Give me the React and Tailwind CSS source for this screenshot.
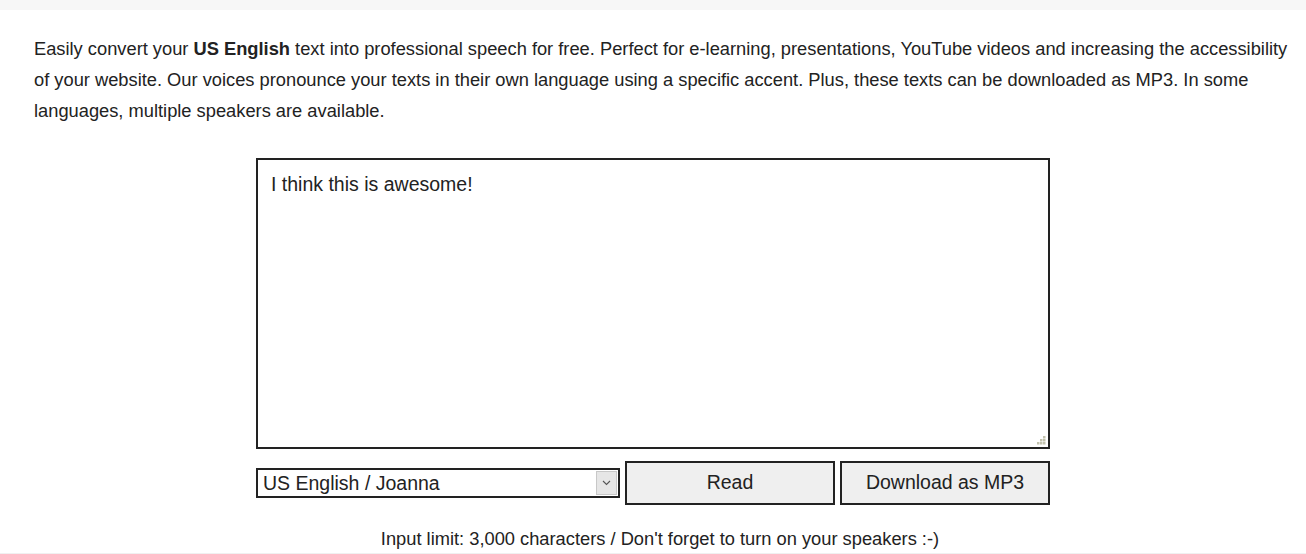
import React, { useState } from "react";

function ResizeGrip() {
  // little dotted corner in the bottom right of the text box
  const dots = [
    [6, 0],
    [3, 3],
    [6, 3],
    [0, 6],
    [3, 6],
    [6, 6],
  ];
  return (
    <svg width="9" height="9" viewBox="0 0 9 9" className="absolute right-[4px] bottom-[4px]">
      {dots.map(([x, y], i) => (
        <rect key={i} x={x} y={y} width="2.5" height="2.5" fill="#c2c2ad" />
      ))}
    </svg>
  );
}

export default function App() {
  const [text, setText] = useState("I think this is awesome!");
  const [voice, setVoice] = useState("joanna");

  return (
    <div className="w-[1306px] h-[554px] bg-white text-[#222] font-['Liberation_Sans',Arial,sans-serif] flex flex-col overflow-hidden">
      <div className="h-[10px] bg-[#f7f7f7]" />

      <p className="mt-[23px] pl-[34px] pr-[12px] text-[18.3px] leading-[31px]">
        Easily convert your <b>US English</b> text into professional speech for free. Perfect for e-learning,
        presentations, YouTube videos and increasing the accessibility of your website. Our voices pronounce your
        texts in their own language using a specific accent. Plus, these texts can be downloaded as MP3. In some
        languages, multiple speakers are available.
      </p>

      <div className="mt-[32px] flex flex-col items-center">
        <div className="relative w-[794px] h-[291px]">
          <textarea
            value={text}
            onChange={(e) => setText(e.target.value)}
            className="w-full h-full border-2 border-[#222] bg-white resize-none outline-none px-[13px] pt-[12px] text-[19.5px] leading-[24px] text-[#222] font-['Liberation_Sans',Arial,sans-serif]"
          />
          <ResizeGrip />
        </div>

        <div className="mt-[12px] w-[794px] flex items-center gap-[5px]">
          <div className="relative w-[364px] h-[30px]">
            <select
              value={voice}
              onChange={(e) => setVoice(e.target.value)}
              className="appearance-none w-full h-full border-2 border-[#222] bg-white pl-[5px] text-[19.5px] leading-[24px] text-[#222] outline-none font-['Liberation_Sans',Arial,sans-serif]"
            >
              <option value="joanna">US English / Joanna</option>
              <option value="matthew">US English / Matthew</option>
              <option value="ivy">US English / Ivy</option>
            </select>
            <span className="pointer-events-none absolute right-[3px] top-[3px] w-[21px] h-[24px] bg-[#e6e6e6] border border-[#c8c8c8] flex items-center justify-center">
              <svg width="9" height="6" viewBox="0 0 9 6">
                <path d="M1 1 L4.5 4.5 L8 1" fill="none" stroke="#555" strokeWidth="1.1" />
              </svg>
            </span>
          </div>
          <button className="w-[210px] h-[44px] border-2 border-[#222] bg-[#efefef] text-[19.5px] text-[#222]">
            Read
          </button>
          <button className="w-[210px] h-[44px] border-2 border-[#222] bg-[#efefef] text-[19.5px] text-[#222]">
            Download as MP3
          </button>
        </div>

        <p className="mt-[23px] pl-[14px] text-[18.3px] leading-[21px]">
          Input limit: 3,000 characters / Don't forget to turn on your speakers :-)
        </p>
      </div>

      <div className="mt-auto h-[1px] bg-[#f0f0f0]" />
    </div>
  );
}
